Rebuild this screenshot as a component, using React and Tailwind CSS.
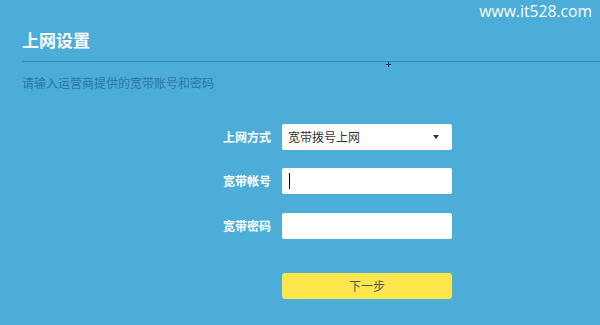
import React from "react";

export default function App() {
  const cjk = { fontFamily: '"Noto Sans CJK SC", "Noto Sans", sans-serif' };
  return (
    <div className="relative w-[600px] h-[325px] overflow-hidden bg-[#4badd8]" style={cjk}>
      <div className="absolute right-[8px] top-[1px] text-[15.7px] leading-[21px] text-white" style={{ fontFamily: '"Open Sans", "Noto Sans", sans-serif' }}>
        www.it528.com
      </div>
      <div className="absolute left-[386px] top-[64px] w-[5px] h-px bg-[#1a2a4a]" />
      <div className="absolute left-[388px] top-[62px] w-px h-[5px] bg-[#1a2a4a]" />
      <div className="pl-[22px] pt-[31px]">
        <div className="text-[17px] leading-[17px] font-bold text-white">上网设置</div>
        <div className="mt-[13px] h-px bg-[#2a88b8]" />
        <div className="mt-[15px] text-[12px] leading-[12px] text-[#2a76a6]">请输入运营商提供的宽带账号和密码</div>
      </div>
      <div className="mt-[35px] flex flex-col">
        <div className="flex items-center h-[26px]">
          <div className="w-[271px] text-right text-[12px] font-bold text-white">上网方式</div>
          <div className="ml-[11px] w-[170px] h-[26px] bg-white rounded-[2px] flex items-center justify-between pl-[6px] pr-[13px]">
            <span className="text-[12px] text-[#333]">宽带拨号上网</span>
            <span className="w-0 h-0 border-l-[3px] border-r-[3px] border-t-[4px] border-l-transparent border-r-transparent border-t-[#333]" />
          </div>
        </div>
        <div className="flex items-center h-[26px] mt-[18px]">
          <div className="w-[271px] text-right text-[12px] font-bold text-white">宽带帐号</div>
          <div className="ml-[11px] w-[170px] h-[26px] bg-white rounded-[2px] flex items-center pl-[7px]">
            <span className="w-px h-[16px] bg-black" />
          </div>
        </div>
        <div className="flex items-center h-[26px] mt-[19px]">
          <div className="w-[271px] text-right text-[12px] font-bold text-white">宽带密码</div>
          <div className="ml-[11px] w-[170px] h-[26px] bg-white rounded-[2px]" />
        </div>
        <div className="flex items-center h-[26px] mt-[34px]">
          <div className="w-[271px]" />
          <div className="ml-[11px] w-[170px] h-[26px] bg-[#fde74c] rounded-[3px] flex items-center justify-center text-[12px] text-[#555]">下一步</div>
        </div>
      </div>
    </div>
  );
}
